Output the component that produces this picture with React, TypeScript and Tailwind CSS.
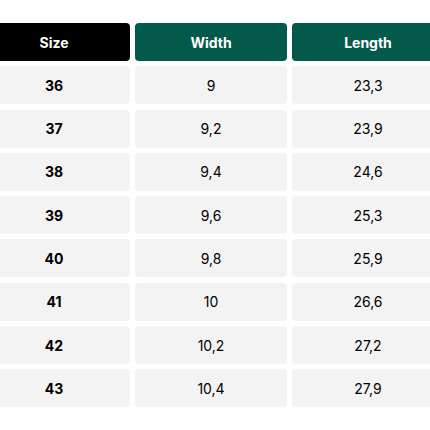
const rows = [
	["36", "9", "23,3"],
	["37", "9,2", "23,9"],
	["38", "9,4", "24,6"],
	["39", "9,6", "25,3"],
	["40", "9,8", "25,9"],
	["41", "10", "26,6"],
	["42", "10,2", "27,2"],
	["43", "10,4", "27,9"],
];

export default function App() {
	return (
		<div className="h-[430px] w-[430px] overflow-hidden bg-white pt-[23px] font-['Inter',sans-serif] text-[14px] text-black">
			<div className="ml-[-22px] grid w-[466px] grid-cols-[152px_152px_152px] gap-x-[5px] gap-y-[5.3px]">
				<div className="flex h-[38px] items-center justify-center rounded-[4px] bg-black font-bold text-white">
					Size
				</div>
				<div className="flex h-[38px] items-center justify-center rounded-[4px] bg-[#03594a] font-bold text-white">
					Width
				</div>
				<div className="flex h-[38px] items-center justify-center rounded-[4px] bg-[#03594a] font-bold text-white">
					Length
				</div>
				{rows.map((r) => (
					<>
						<div key={r[0] + "a"} className="flex h-[38px] items-center justify-center rounded-[4px] bg-[#f3f3f3] font-bold">
							{r[0]}
						</div>
						<div key={r[0] + "b"} className="flex h-[38px] items-center justify-center rounded-[4px] bg-[#f3f3f3]">
							{r[1]}
						</div>
						<div key={r[0] + "c"} className="flex h-[38px] items-center justify-center rounded-[4px] bg-[#f3f3f3]">
							{r[2]}
						</div>
					</>
				))}
			</div>
		</div>
	);
}
